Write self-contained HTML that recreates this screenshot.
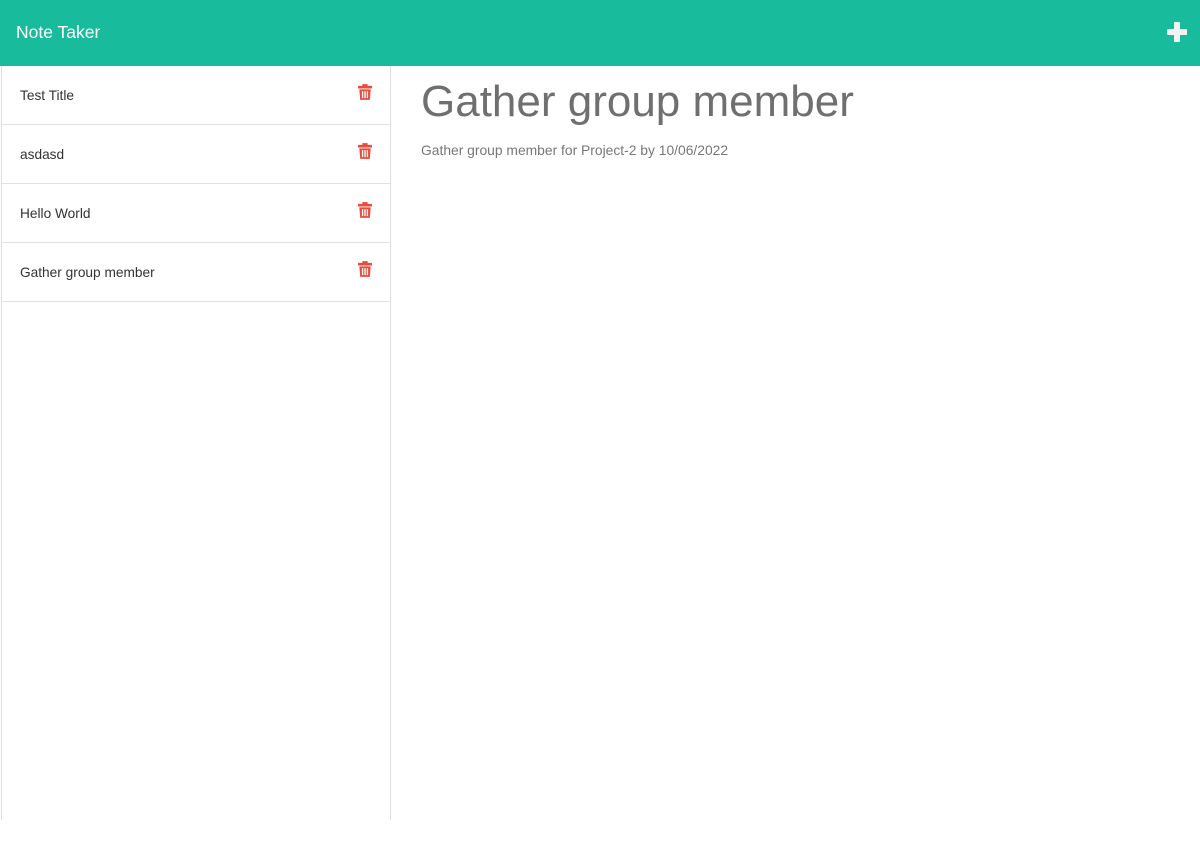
<!DOCTYPE html>
<html><head><style>
*{box-sizing:border-box;margin:0;padding:0}
body{width:1200px;height:860px;background:#fff;font-family:"Liberation Sans",sans-serif;position:relative;overflow:hidden}
.hdr{position:absolute;left:0;top:0;width:1200px;height:66px;background:#18bc9c}
.hdr .t{position:absolute;left:16px;top:22px;color:#fff;font-size:17.5px}
.plus{position:absolute;left:1167px;top:22px;width:20px;height:20px}
.plus:before{content:"";position:absolute;left:7px;top:0;width:6px;height:20px;background:#f2f2f2;border-radius:1px}
.plus:after{content:"";position:absolute;left:0;top:7px;width:20px;height:6px;background:#f2f2f2;border-radius:1px}
.side{position:absolute;left:1px;top:66px;width:390px;height:754px;border-left:1px solid #ddd;border-right:1px solid #ddd}
.it{height:59px;border-bottom:1px solid #e2e2e2;position:relative}
.it span{position:absolute;left:18px;top:22px;font-size:13.7px;color:#333}
.it svg{position:absolute;left:356px;top:17px}
h1{position:absolute;left:421px;top:77px;font-size:44px;font-weight:normal;color:#6f6f6f}
p{position:absolute;left:421px;top:142px;font-size:13.85px;color:#777}
</style></head><body>
<div class="hdr"><div class="t">Note Taker</div><div class="plus"></div></div>
<div class="side">
<div class="it"><span>Test Title</span><svg width="14" height="18" viewBox="0 0 16 18"><rect x="0" y="2" width="16" height="3" fill="#e74c3c"/><rect x="5" y="0" width="6" height="3" fill="#e74c3c"/><path d="M1.5 6h13l-1 12h-11z" fill="#e74c3c"/><rect x="4.5" y="8" width="1.5" height="8" fill="#fff"/><rect x="7.3" y="8" width="1.5" height="8" fill="#fff"/><rect x="10" y="8" width="1.5" height="8" fill="#fff"/></svg></div>
<div class="it"><span>asdasd</span><svg width="14" height="18" viewBox="0 0 16 18"><rect x="0" y="2" width="16" height="3" fill="#e74c3c"/><rect x="5" y="0" width="6" height="3" fill="#e74c3c"/><path d="M1.5 6h13l-1 12h-11z" fill="#e74c3c"/><rect x="4.5" y="8" width="1.5" height="8" fill="#fff"/><rect x="7.3" y="8" width="1.5" height="8" fill="#fff"/><rect x="10" y="8" width="1.5" height="8" fill="#fff"/></svg></div>
<div class="it"><span>Hello World</span><svg width="14" height="18" viewBox="0 0 16 18"><rect x="0" y="2" width="16" height="3" fill="#e74c3c"/><rect x="5" y="0" width="6" height="3" fill="#e74c3c"/><path d="M1.5 6h13l-1 12h-11z" fill="#e74c3c"/><rect x="4.5" y="8" width="1.5" height="8" fill="#fff"/><rect x="7.3" y="8" width="1.5" height="8" fill="#fff"/><rect x="10" y="8" width="1.5" height="8" fill="#fff"/></svg></div>
<div class="it"><span>Gather group member</span><svg width="14" height="18" viewBox="0 0 16 18"><rect x="0" y="2" width="16" height="3" fill="#e74c3c"/><rect x="5" y="0" width="6" height="3" fill="#e74c3c"/><path d="M1.5 6h13l-1 12h-11z" fill="#e74c3c"/><rect x="4.5" y="8" width="1.5" height="8" fill="#fff"/><rect x="7.3" y="8" width="1.5" height="8" fill="#fff"/><rect x="10" y="8" width="1.5" height="8" fill="#fff"/></svg></div>
</div>
<h1>Gather group member</h1>
<p>Gather group member for Project-2 by 10/06/2022</p>
</body></html>
